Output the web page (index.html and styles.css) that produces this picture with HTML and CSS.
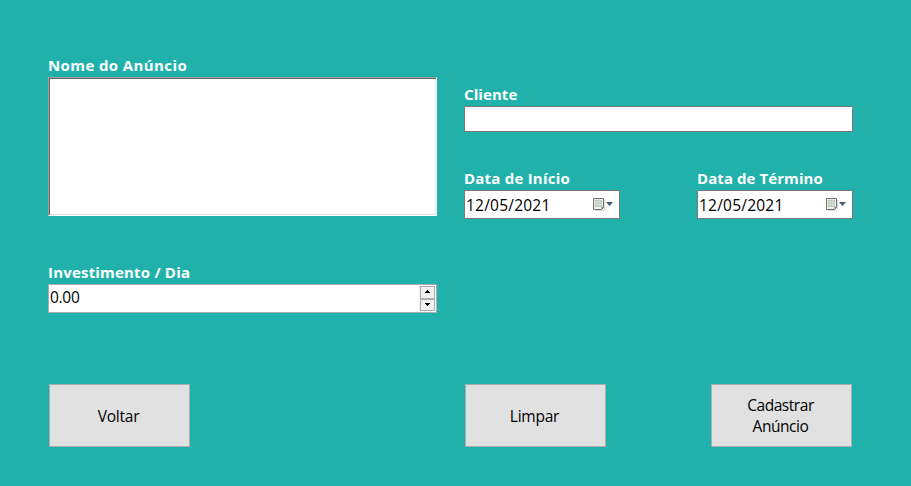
FILE: index.html
```
<!DOCTYPE html>
<html lang="pt-BR">
<head>
<meta charset="utf-8">
<title>Cadastro de Anúncio</title>
<link rel="stylesheet" href="styles.css">
</head>
<body>
<main class="form">
  <div class="fields">
    <section class="column">
      <div class="field">
        <div class="label name-label">Nome do Anúncio</div>
        <div class="box name-box"></div>
      </div>
      <div class="field field-invest">
        <div class="label invest-label">Investimento / Dia</div>
        <div class="box number-box">
          <span class="number-value">0.00</span>
          <div class="spinner">
            <div class="spin"><svg width="7" height="4" shape-rendering="crispEdges"><path d="M3 0h1v1h1v1h1v1H1V2h1V1h1z"/></svg></div>
            <div class="spin"><svg width="7" height="4" shape-rendering="crispEdges"><path d="M1 0h5v1H5v1H4v1H3V2H2V1H1z"/></svg></div>
          </div>
        </div>
      </div>
    </section>
    <section class="column column-right">
      <div class="field">
        <div class="label">Cliente</div>
        <div class="box client-box"></div>
      </div>
      <div class="dates">
        <div class="field date-field">
          <div class="label start-label">Data de Início</div>
          <div class="box date-box">
            <span class="date-value">12/05/2021</span>
            <svg class="calendar" width="21" height="15" viewBox="0 0 21 15"><path d="M2 13.5h8.5l1-1V3" fill="none" stroke="#ddd8d2"/><path d="M.5 1.5h10v9l-2 2h-8z" fill="#edeeea" stroke="#77716c"/><path d="M2 3h7v7H2z" fill="#b5c5bd"/><path d="M2 5.2h7M2 7.7h7M4.2 3v7M6.8 3v7" stroke="#e7ece4" stroke-width=".7"/><path d="M8.5 12v-2h2z" fill="#77716c"/><path d="M13 5h7l-3.5 4z" fill="#465777"/></svg>
          </div>
        </div>
        <div class="field date-field">
          <div class="label">Data de Término</div>
          <div class="box date-box">
            <span class="date-value">12/05/2021</span>
            <svg class="calendar" width="21" height="15" viewBox="0 0 21 15"><path d="M2 13.5h8.5l1-1V3" fill="none" stroke="#ddd8d2"/><path d="M.5 1.5h10v9l-2 2h-8z" fill="#edeeea" stroke="#77716c"/><path d="M2 3h7v7H2z" fill="#b5c5bd"/><path d="M2 5.2h7M2 7.7h7M4.2 3v7M6.8 3v7" stroke="#e7ece4" stroke-width=".7"/><path d="M8.5 12v-2h2z" fill="#77716c"/><path d="M13 5h7l-3.5 4z" fill="#465777"/></svg>
          </div>
        </div>
      </div>
    </section>
  </div>
  <div class="actions">
    <button class="button"><span class="caption">Voltar</span></button>
    <button class="button button-clear"><span class="caption">Limpar</span></button>
    <button class="button button-submit">Cadastrar<br>Anúncio</button>
  </div>
</main>
</body>
</html>
```
FILE: styles.css
```
* { box-sizing: border-box; }
body {
  margin: 0;
  background: #20b2aa;
  color: #000;
  font-family: "Open Sans", "Noto Sans", sans-serif;
  font-size: 15.5px;
}
.form {
  height: 486px;
  padding: 55px 58px 0 48px;
}
.fields {
  display: grid;
  grid-template-columns: 389px 389px;
  column-gap: 27px;
  height: 329px;
}
.column-right { padding-top: 29px; }
.label {
  height: 22px;
  color: #fff;
  font-size: 15px;
  font-weight: 700;
  letter-spacing: 0.08px;
  line-height: 21px;
  white-space: nowrap;
}
.name-label { letter-spacing: 0.4px; }
.invest-label { letter-spacing: 0.19px; }
.start-label { letter-spacing: 0.22px; }
.box {
  background: #fff;
  border: 1px solid #7a7a7a;
}
.name-box {
  height: 139px;
  border-color: #a0a0a0 #fff #fff #a0a0a0;
  box-shadow: inset 1px 1px #696969, inset -1px -1px #e3e3e3;
}
.field-invest { margin-top: 46px; }
.number-box {
  display: flex;
  justify-content: space-between;
  height: 29px;
  padding: 1px;
  border-color: #abadb3;
}
.number-value {
  letter-spacing: -0.3px;
  line-height: 23px;
}
.spinner {
  display: flex;
  flex-direction: column;
  width: 16px;
  height: 25px;
  padding-left: 1px;
  background: #f0f0f0;
}
.spin {
  display: flex;
  align-items: center;
  justify-content: center;
  flex: 1;
  border: 1px solid #acacac;
}
.client-box { height: 26px; }
.dates {
  display: flex;
  justify-content: space-between;
  margin-top: 36px;
}
.date-field { width: 156px; }
.date-box {
  display: flex;
  align-items: center;
  justify-content: space-between;
  height: 29px;
  padding: 0 5px 0 1px;
}
.date-value { letter-spacing: 0.22px; }
.actions {
  display: flex;
  padding-left: 1px;
}
.button {
  width: 141px;
  height: 63px;
  padding: 0 2px 0 0;
  background: #e1e1e1;
  border: 1px solid #adadad;
  color: #000;
  font: inherit;
  letter-spacing: -0.25px;
  line-height: 21px;
}
.caption {
  display: block;
  padding-top: 2px;
}
.button-clear { margin-left: 275px; }
.button-submit {
  margin-left: 105px;
  letter-spacing: -0.45px;
}
```
